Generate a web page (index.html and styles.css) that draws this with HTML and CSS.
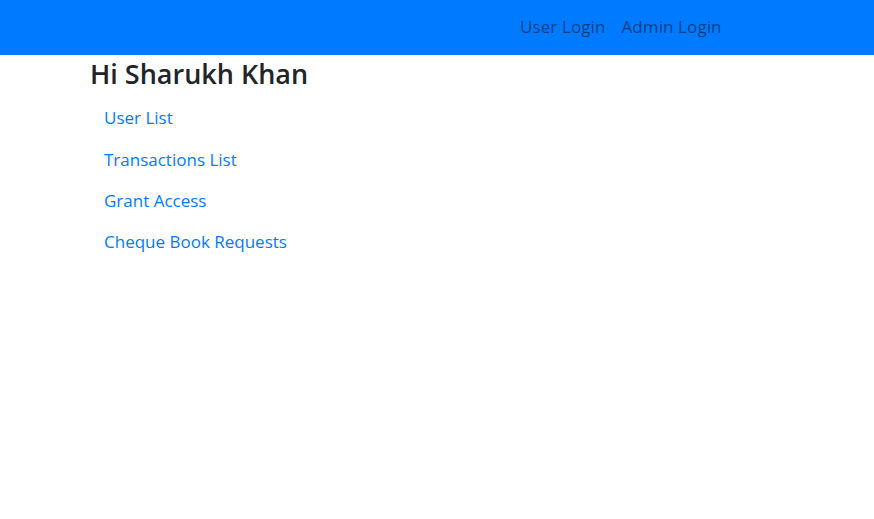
FILE: index.html
```html
<!DOCTYPE html>
<html>
<head>
<meta charset="utf-8">
<link rel="stylesheet" href="styles.css">
</head>
<body>
<nav class="navbar">
  <div class="navbar-inner">
    <a class="nav-link" href="#">User Login</a>
    <a class="nav-link" href="#">Admin Login</a>
  </div>
</nav>
<main class="container">
  <h3 class="greeting">Hi Sharukh Khan</h3>
  <ul class="menu">
    <li><a href="#">User List</a></li>
    <li><a href="#">Transactions List</a></li>
    <li><a href="#">Grant Access</a></li>
    <li><a href="#">Cheque Book Requests</a></li>
  </ul>
</main>
</body>
</html>
```
FILE: styles.css
```css
* { box-sizing: border-box; }
body {
  margin: 0;
  font-family: "Open Sans", "Noto Sans", sans-serif;
  font-size: 17px;
  line-height: 1.5;
  color: #212529;
  background: #fff;
}
.navbar {
  background: #007bff;
  height: 55px;
  display: flex;
  align-items: center;
}
.navbar-inner {
  display: flex;
  padding-left: 512px;
  padding-bottom: 2px;
}
.nav-link {
  color: rgba(0, 0, 0, 0.5);
  text-decoration: none;
  padding: 0 8px;
  font-size: 17px;
  letter-spacing: 0.1px;
}
.container {
  padding-left: 90px;
}
.greeting {
  margin: 0;
  font-size: 27px;
  font-weight: 600;
  line-height: 1.2;
  padding-top: 3px;
}
.menu {
  list-style: none;
  margin: 0;
  padding: 7px 0 0;
}
.menu li a {
  display: block;
  padding: 8px 14px;
  line-height: 25.33px;
  color: #007bff;
  text-decoration: none;
}
```
